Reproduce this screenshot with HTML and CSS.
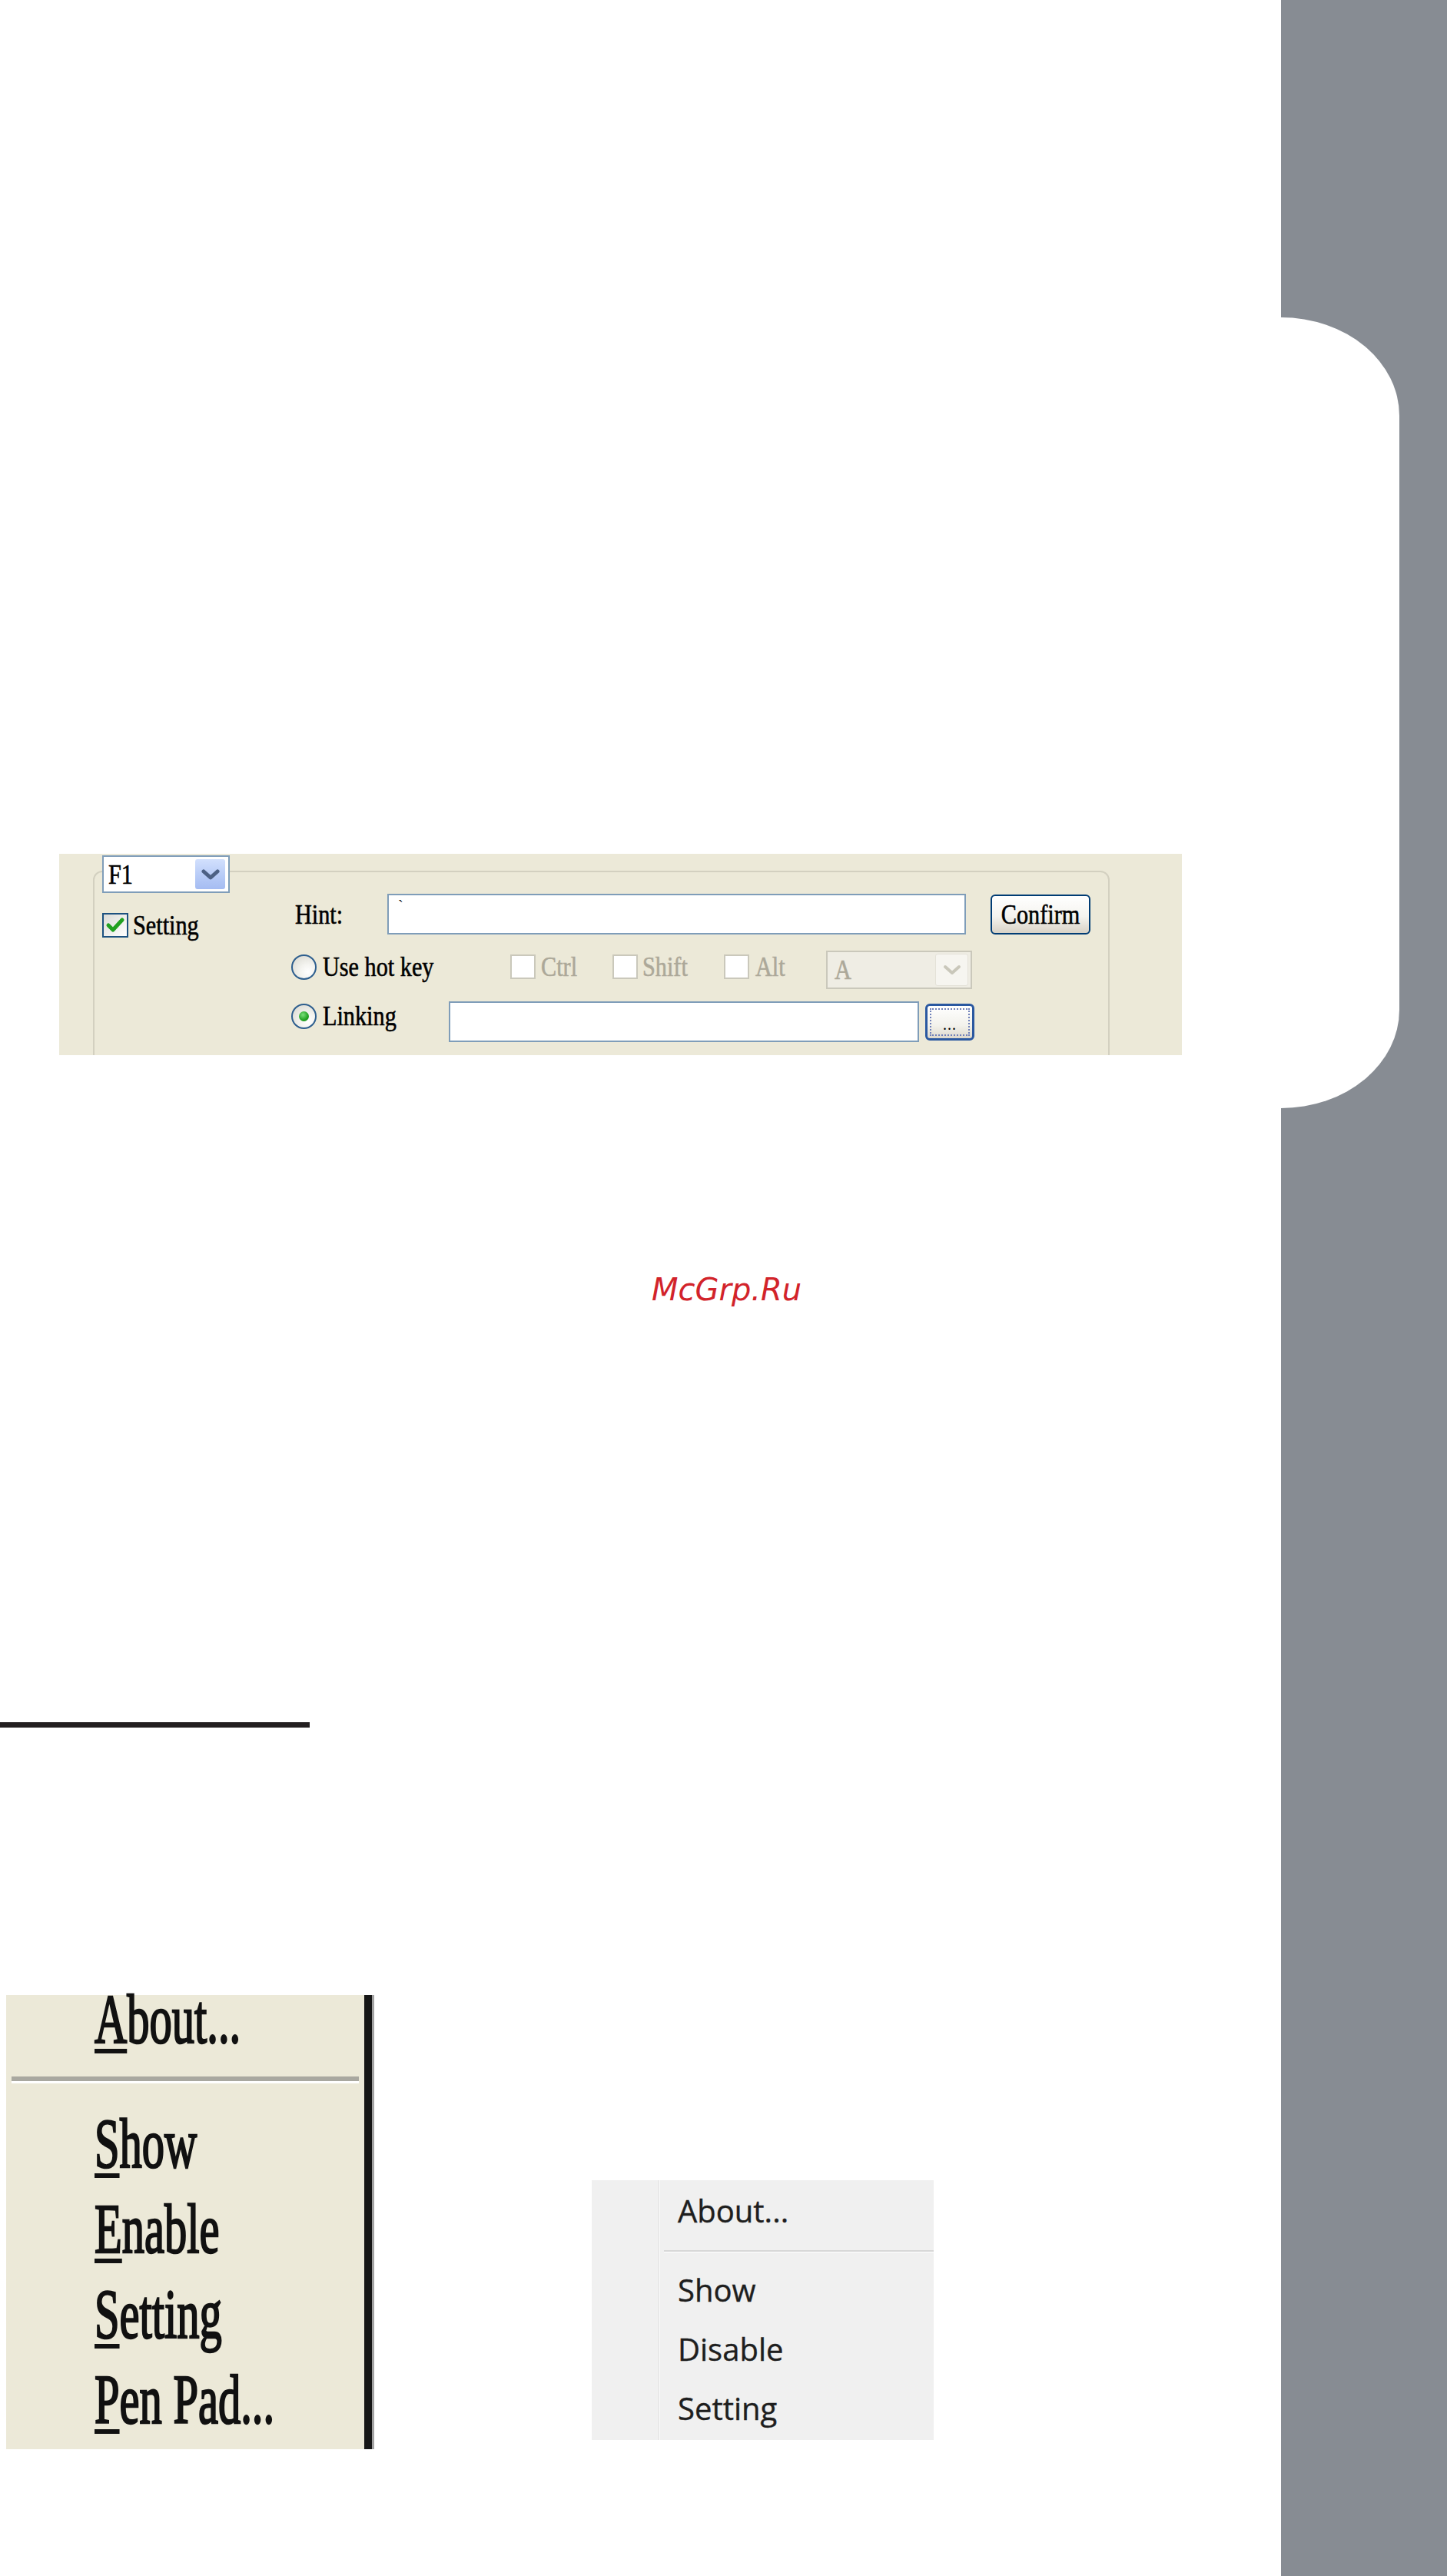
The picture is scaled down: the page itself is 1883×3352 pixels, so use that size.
FILE: index.html
```html
<!DOCTYPE html>
<html lang="en">
<head>
<meta charset="utf-8">
<title>Pen Pad settings</title>
<link rel="stylesheet" href="styles.css">
</head>
<body>
<div class="page">
  <main class="main">
    <section class="dialog">
      <div class="group">
        <div class="left-col">
          <div class="combo combo-f1">
            <span class="lbl">F1</span>
            <span class="combo-btn">
              <svg width="24" height="14" viewBox="0 0 24 14"><polyline points="3,3 12,11 21,3" fill="none" stroke="#4d6185" stroke-width="5" stroke-linecap="round" stroke-linejoin="round"/></svg>
            </span>
          </div>
          <div class="check-row">
            <span class="cb">
              <svg width="26" height="22" viewBox="0 0 26 22"><polyline points="4,11 10,17 22,4" fill="none" stroke="#21a121" stroke-width="5" stroke-linecap="round" stroke-linejoin="round"/></svg>
            </span>
            <span class="lbl">Setting</span>
          </div>
        </div>
        <div class="right-col">
          <div class="row row-hint">
            <span class="cell cell-hint"><span class="lbl">Hint:</span></span>
            <span class="field field-hint"><span class="mark">`</span></span>
            <span class="btn-confirm"><span class="lbl lbl-c">Confirm</span></span>
          </div>
          <div class="row row-hot">
            <span class="cell cell-radio1"><span class="radio"></span><span class="lbl">Use hot key</span></span>
            <span class="cell cell-ctrl"><span class="cb cb-off"></span><span class="lbl dis">Ctrl</span></span>
            <span class="cell cell-shift"><span class="cb cb-off"></span><span class="lbl dis">Shift</span></span>
            <span class="cell cell-alt"><span class="cb cb-off"></span><span class="lbl dis">Alt</span></span>
            <span class="combo combo-a">
              <span class="lbl dis">A</span>
              <span class="combo-btn combo-btn-dis">
                <svg width="24" height="14" viewBox="0 0 24 14"><polyline points="3,3 12,11 21,3" fill="none" stroke="#c9c7ba" stroke-width="4" stroke-linecap="round" stroke-linejoin="round"/></svg>
              </span>
            </span>
          </div>
          <div class="row row-link">
            <span class="cell cell-radio2"><span class="radio"><span class="dot"></span></span><span class="lbl">Linking</span></span>
            <span class="field field-link"></span>
            <span class="btn-dots"><span class="dots">...</span></span>
          </div>
        </div>
      </div>
    </section>

    <p class="brand">McGrp.Ru</p>

    <div class="rule"></div>

    <div class="menus">
      <div class="menu-xp">
        <div class="xp-item xp-about"><span class="xp-t"><u>A</u>bout...</span></div>
        <div class="xp-sep"></div>
        <div class="xp-item"><span class="xp-t"><u>S</u>how</span></div>
        <div class="xp-item"><span class="xp-t"><u>E</u>nable</span></div>
        <div class="xp-item"><span class="xp-t"><u>S</u>etting</span></div>
        <div class="xp-item"><span class="xp-t"><u>P</u>en Pad...</span></div>
      </div>
      <div class="menu-w7">
        <div class="w7-gutter"></div>
        <div class="w7-list">
          <div class="w7-item w7-about">About...</div>
          <div class="w7-sep"></div>
          <div class="w7-item">Show</div>
          <div class="w7-item">Disable</div>
          <div class="w7-item">Setting</div>
        </div>
      </div>
    </div>
  </main>
  <aside class="side">
    <div class="tab"></div>
  </aside>
</div>
</body>
</html>
```

FILE: styles.css
```css
* { box-sizing: border-box; }
html, body { margin: 0; padding: 0; background: #fff; }
body { width: 1883px; height: 3352px; overflow: hidden; }

.page {
  display: grid;
  grid-template-columns: 1667px 216px;
  height: 3352px;
}
.main {
  display: flex;
  flex-direction: column;
  align-items: flex-start;
}
.side { background: #878c93; }
.tab {
  margin-top: 413px;
  width: 154px;
  height: 1029px;
  background: #fff;
  border-radius: 0 154px 154px 0 / 0 128px 128px 0;
}

/* ---------- settings dialog ---------- */
.dialog {
  margin: 1111px 0 0 77px;
  width: 1461px;
  height: 262px;
  background: #ece9d8;
  overflow: hidden;
  font-family: "Liberation Serif", "Times New Roman", serif;
  font-size: 36px;
  color: #000;
}
.lbl {
  display: inline-block;
  transform: scaleX(.84);
  transform-origin: 0 50%;
  white-space: nowrap;
  line-height: 1;
  -webkit-text-stroke: .6px currentColor;
}
.lbl.dis { color: #aca899; }
.group {
  margin: 22px 0 0 44px;
  width: 1323px;
  height: 260px;
  border: 2px solid #d3d0c0;
  border-radius: 12px;
  display: flex;
  align-items: flex-start;
}
.left-col {
  width: 256px;
  flex: none;
  display: flex;
  flex-direction: column;
  align-items: flex-start;
}
.combo {
  display: flex;
  align-items: center;
  justify-content: space-between;
  border: 2px solid #7f9db9;
  background: #fff;
  flex: none;
}
.combo-f1 {
  margin: -22px 0 0 10px;
  width: 166px;
  height: 49px;
  padding: 0 4px 0 6px;
}
.combo-btn {
  width: 39px;
  height: 39px;
  border-radius: 3px;
  background: linear-gradient(#d2e0fd, #b7cbf7 55%, #a5bcf2);
  display: flex;
  align-items: center;
  justify-content: center;
}
.check-row {
  margin: 24px 0 0 10px;
  display: flex;
  align-items: center;
  gap: 6px;
}
.cb {
  width: 34px;
  height: 32px;
  flex: none;
  border: 2px solid #1c5180;
  background: linear-gradient(135deg, #dcdcd7, #fff);
  display: flex;
  align-items: center;
  justify-content: center;
}
.cb.cb-off {
  width: 33px;
  border-color: #cac8bb;
  background: #fff;
}
.right-col {
  margin-top: 28px;
  display: flex;
  flex-direction: column;
}
.row {
  display: flex;
  align-items: center;
}
.cell {
  display: flex;
  align-items: center;
  flex: none;
}
.row-hint { height: 53px; }
.cell-hint { width: 125px; padding-left: 5px; }
.field {
  display: block;
  flex: none;
  border: 2px solid #7f9db9;
  background: #fff;
}
.field-hint { width: 753px; height: 53px; padding: 4px 0 0 12px; }
.mark { display: block; font-size: 20px; line-height: 1; }
.btn-confirm {
  margin-left: 32px;
  width: 130px;
  height: 52px;
  flex: none;
  border: 2px solid #003c74;
  border-radius: 6px;
  background: linear-gradient(#fff, #f5f4ef 55%, #d8d2c6);
  display: flex;
  align-items: center;
  justify-content: center;
}
.lbl-c { transform-origin: 50% 50%; }

.row-hot { margin-top: 21px; height: 50px; }
.row-hot .cell { margin-bottom: 8px; }
.cell-radio1 { width: 285px; gap: 8px; }
.cell-ctrl { width: 133px; gap: 7px; }
.cell-shift { width: 145px; gap: 6px; }
.cell-alt { width: 133px; gap: 8px; }
.radio {
  width: 33px;
  height: 33px;
  flex: none;
  border-radius: 50%;
  border: 2px solid #2d5e8e;
  background: radial-gradient(circle at 68% 72%, #fff 0, #f4f4f0 35%, #d6d5cc 100%);
  display: flex;
  align-items: center;
  justify-content: center;
}
.dot {
  width: 13px;
  height: 13px;
  border-radius: 50%;
  background: radial-gradient(circle at 40% 35%, #7be07b, #21a121 60%, #168a16);
}
.combo-a {
  width: 190px;
  height: 50px;
  border-color: #cac8bb;
  background: #efede4;
  padding: 0 3px 0 9px;
}
.combo-btn-dis {
  width: 43px;
  height: 42px;
  background: #f6f5f0;
  border: 1px solid #e4e2d8;
}

.row-link { margin-top: 16px; height: 53px; }
.cell-radio2 { width: 205px; gap: 8px; margin-bottom: 15px; }
.field-link { width: 612px; height: 53px; }
.btn-dots {
  margin-left: 8px;
  width: 64px;
  height: 48px;
  flex: none;
  border: 3px solid #2a58a0;
  border-radius: 6px;
  background: linear-gradient(#fff, #f3f2ec 60%, #ddd8cc);
  outline: 2px dotted #6f80b9;
  outline-offset: -8px;
  display: flex;
  align-items: flex-end;
  justify-content: center;
  padding-bottom: 8px;
}
.dots { font-size: 20px; line-height: 1; letter-spacing: 1px; }

/* ---------- watermark ---------- */
.brand {
  margin: 285px 0 0 848px;
  font: italic 40px/40px "DejaVu Sans", sans-serif;
  color: #d2232a;
  white-space: nowrap;
}

/* ---------- rule ---------- */
.rule {
  margin-top: 543px;
  width: 403px;
  height: 7px;
  background: #231f20;
}

/* ---------- menus ---------- */
.menus {
  margin-top: 348px;
  display: flex;
  align-items: flex-start;
}
.menu-xp {
  margin-left: 8px;
  width: 476px;
  height: 591px;
  flex: none;
  background: #ece9d8;
  border-right: 10px solid #161616;
  box-shadow: 3px 0 0 #a2a2a2;
  font: 400 90px "Liberation Serif", "Times New Roman", serif;
  color: #111;
}
.xp-item {
  height: 111px;
  line-height: 111px;
  padding-left: 115px;
  white-space: nowrap;
}
.xp-item.xp-about {
  height: 89px;
  line-height: 64px;
}
.xp-t {
  display: inline-block;
  transform: scaleX(.65);
  transform-origin: 0 50%;
  -webkit-text-stroke: 2.5px currentColor;
}
.xp-t u {
  text-decoration-thickness: 6px;
  text-underline-offset: 8px;
}
.xp-sep {
  margin: 17px 7px 23px 7px;
  height: 9px;
  border-top: 6px solid #a9a8a0;
  border-bottom: 3px solid #fff;
}

.menu-w7 {
  margin: 241px 0 0 286px;
  width: 445px;
  height: 338px;
  flex: none;
  background: #f0f0f0;
  display: flex;
  font: 400 40px "Open Sans", sans-serif;
  color: #1e1e1e;
}
.w7-gutter {
  width: 88px;
  flex: none;
  border-right: 1px solid #dcdcdc;
  box-shadow: 1px 0 0 #fff;
}
.w7-list { flex: 1; }
.w7-item {
  height: 77px;
  line-height: 77px;
  padding-left: 24px;
  white-space: nowrap;
  -webkit-text-stroke: .4px currentColor;
}
.w7-about { margin-top: 1px; }
.w7-sep {
  margin: 13px 0 10px 6px;
  height: 3px;
  border-top: 2px solid #d7d7d7;
  border-bottom: 1px solid #fff;
}
```
